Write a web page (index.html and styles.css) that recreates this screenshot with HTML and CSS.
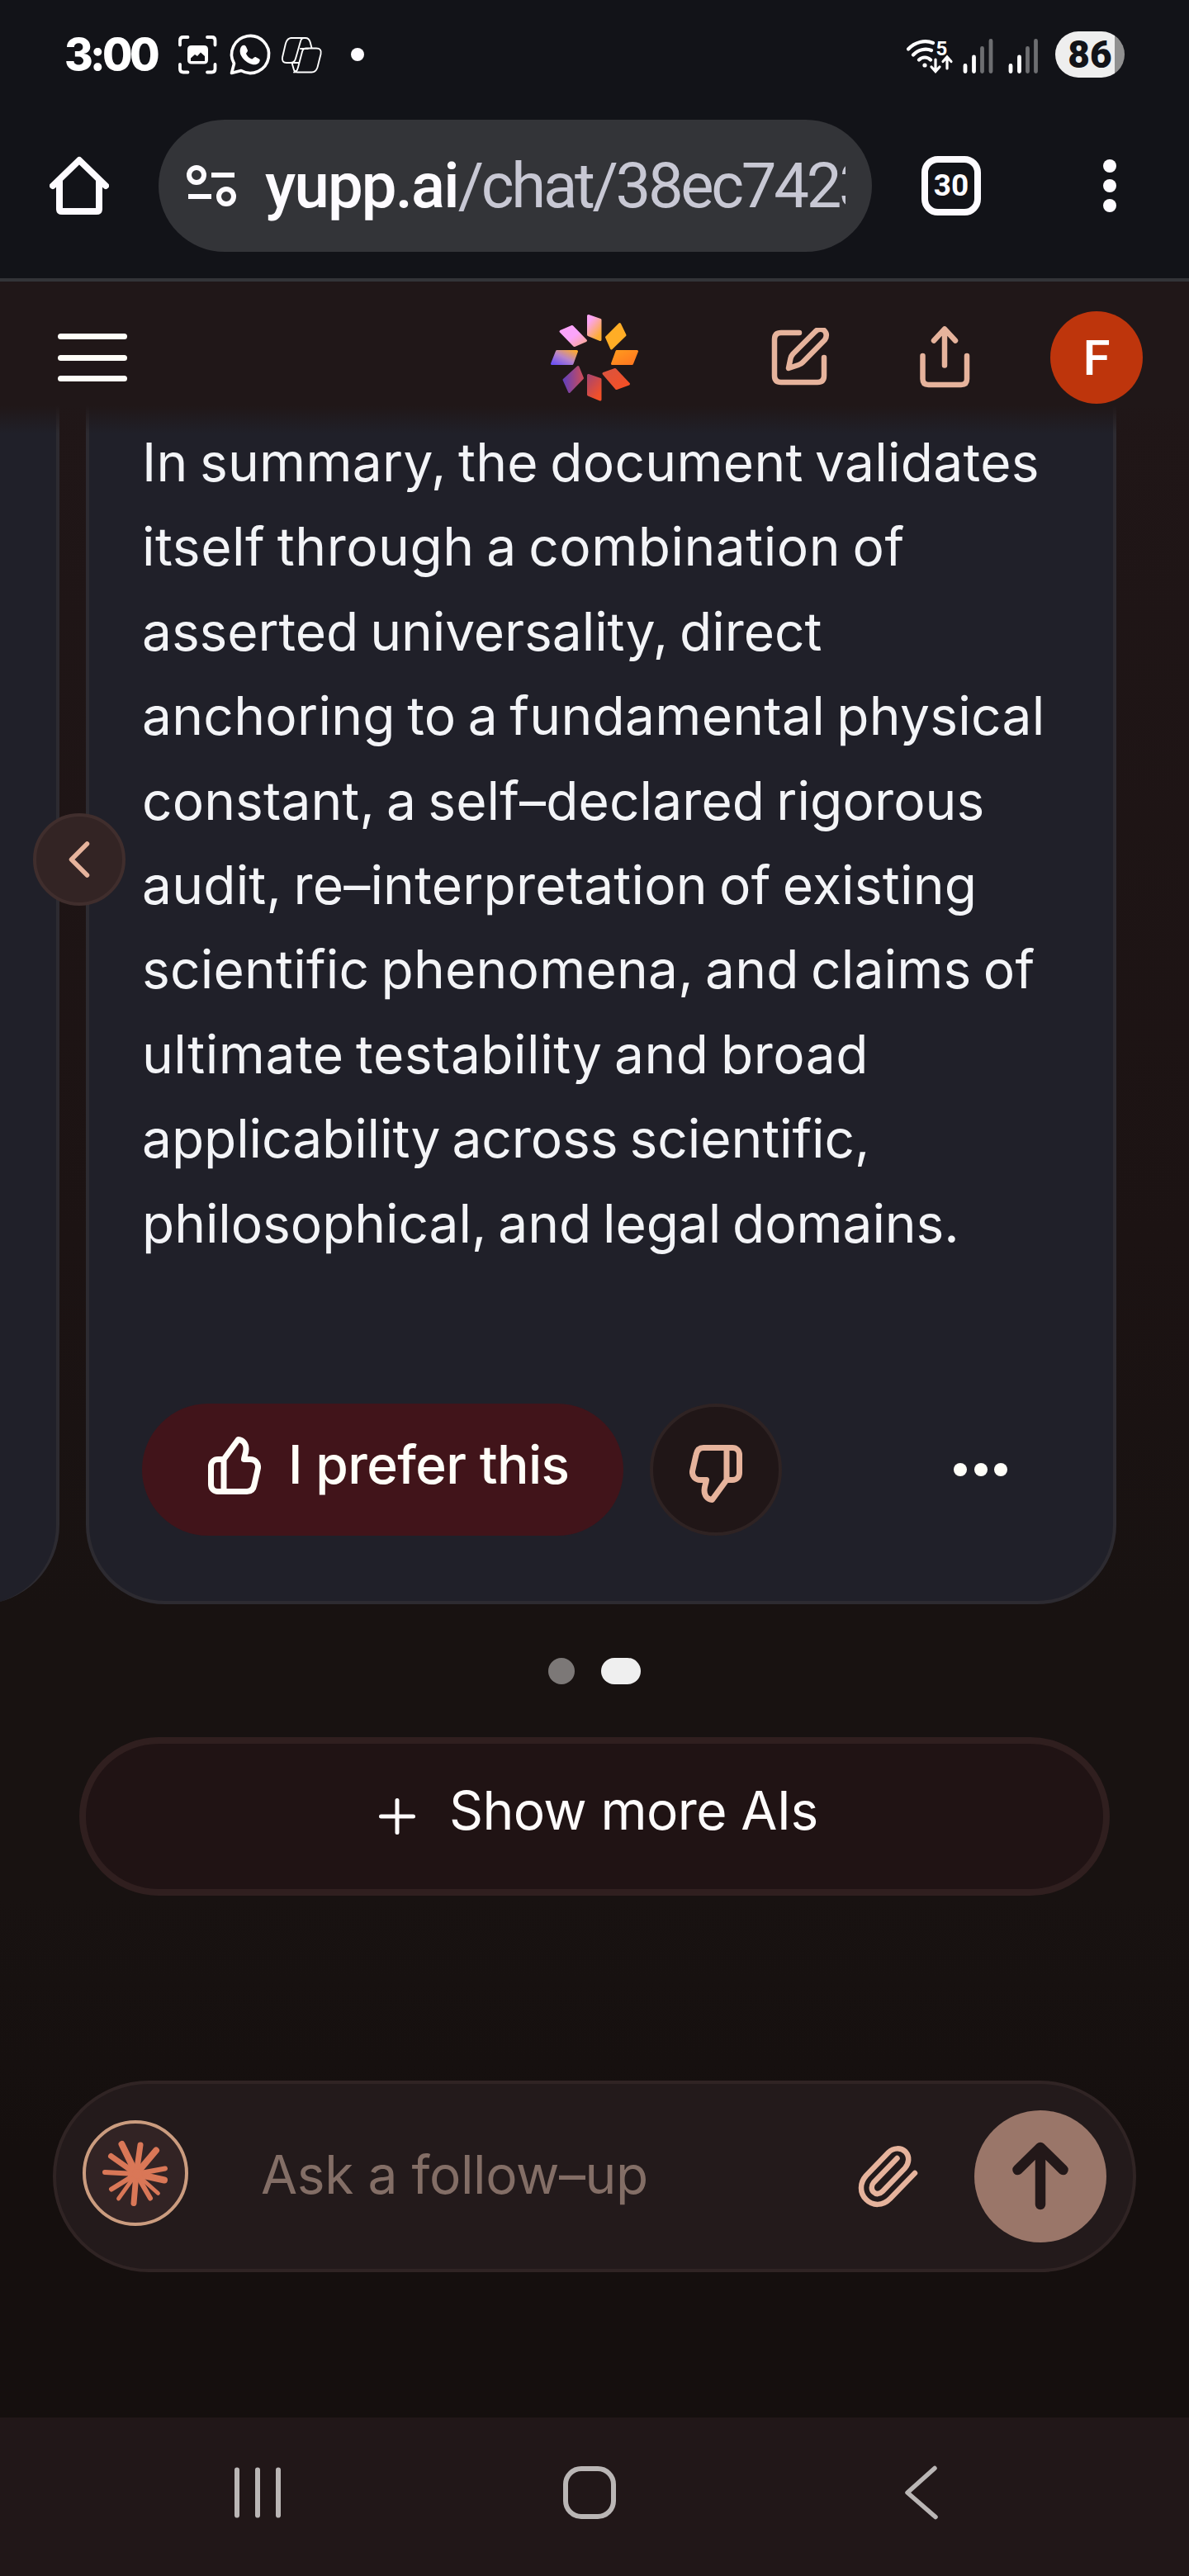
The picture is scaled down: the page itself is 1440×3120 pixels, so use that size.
FILE: index.html
```html
<!DOCTYPE html>
<html lang="en">
<head>
<meta charset="utf-8">
<title>Yupp chat</title>
<link rel="stylesheet" href="styles.css">
</head>
<body>
<div class="screen">
  <div class="status">
    <span class="clock">3:00</span>
    <svg class="notif" width="190" height="60" viewBox="0 0 190 60" fill="none" stroke="#fff" stroke-width="3.8" stroke-linecap="round" stroke-linejoin="round">
      <path d="M8 18.500V13q0-4 4-4h5.500M41 9h5.500q4 0 4 4v5.500M8 42v5.500q0 4 4 4h5.500M41 51.500h5.500q4 0 4-4V42"/>
      <path fill="#fff" stroke="none" fill-rule="evenodd" d="M22 19h15q5 0 5 5v12.500q0 5-5 5H22q-5 0-5-5V24q0-5 5-5zM21 38h17v-6l-5-4.500-4 4.500-3-2-5 4.500z"/>
      <path stroke-width="3.600" d="M70.500 52.500l3-11.500a22.500 22.500 0 1 1 8.500 8.500z"/>
      <path fill="#fff" stroke="none" d="M83 19.500c2-1.500 4-1 5 1l2 4.500c.500 1.500-2 3-2 4 1.500 3.500 4 5.500 7 6.500 1.500 0 2.500-3 4.500-2.500l4.500 2.500c1.500 1 .500 4-1.500 5.500-3 2-7 1.500-11-.500-5-2.500-9-7-10.500-11.500-1-4 0-7.500 2-9.500z"/>
      <g stroke-width="1.900"><path d="M142 10h18q4 0 5.500 4.500l2 7.500M167 22.500h6q7 0 5.500 7l-4 16q-2 6-7 6h-17q-4 0-5-4.500l-2-7M143 40h-6q-6 0-5-6.500l4-17q2-6.500 7-6.500M158 10q-3 0-4 4l-6 21q-1.500 5-6 5M167 22.500h-6q-4 0-5 4l-5 19q-1.500 6-5 6M154 23h9M144 40h8.500"/></g>
    </svg>
    <i class="more-dot"></i>
    <span class="spacer"></span>
    <svg class="radio" width="162" height="48" viewBox="0 0 162 48" fill="none" stroke="#fff" stroke-linecap="round">
      <path stroke-width="4.200" d="M2 17.500C10 9 22 6 32 10M8 24.500C14 18 23 16 30 19M15 30.500c4-4 10-4 14 0"/>
      <circle cx="22" cy="37" r="2.600" fill="#fff" stroke="none"/>
      <path stroke-width="3.200" d="M35 30v14m-5-5l5 5.500 5-5.500M49 41V27.500m-5 5l5-5.500 5 5.500"/>
      <text x="35.500" y="25" class="five">5</text>
      <g stroke-width="4.800"><path d="M71 37.500v7M81.500 27v17.500M126 37.500v7M136.500 27v17.500"/><path stroke="#6d6e71" d="M91.500 16.500v28M102 7.500v37M146.500 16.500v28M156.500 7.500v37"/></g>
    </svg>
    <span class="battery"><b>86</b></span>
  </div>

  <div class="toolbar">
    <svg class="home" width="72" height="72" viewBox="0 0 72 72" fill="none" stroke="#fdfbff" stroke-width="8" stroke-linejoin="round" stroke-linecap="round"><path d="M4 36L36 5l32 31M12 30v34q0 3 3 3h42q3 0 3-3V30"/></svg>
    <div class="address">
      <svg width="60" height="52" viewBox="0 0 60 52" fill="none" stroke="#fdfbff" stroke-width="6"><circle cx="12" cy="13" r="9"/><path d="M30 13h28M2 39h28"/><circle cx="48" cy="39" r="9"/></svg>
      <span class="url"><b>yupp.ai</b>/chat/38ec7423</span>
    </div>
    <span class="tabs">30</span>
    <span class="kebab"><i></i><i></i><i></i></span>
  </div>

  <header class="header">
    <div class="menu"><i></i><i></i><i></i></div>
    <svg class="logo" width="108" height="108" viewBox="666 379 108 108" stroke-width="3" stroke-linejoin="round">
      <defs>
        <linearGradient id="a" x1="0" y1="0" x2=".6" y2="1"><stop offset=".2" stop-color="#fba4f3"/><stop offset="1" stop-color="#fdac35"/></linearGradient>
        <linearGradient id="b" x1="0" y1="0" x2="1" y2="1"><stop offset="0" stop-color="#ff9a1e"/><stop offset="1" stop-color="#ff7520"/></linearGradient>
        <linearGradient id="c" x1="0" y1="0" x2="1" y2="1"><stop offset="0" stop-color="#d95440"/><stop offset="1" stop-color="#f84f22"/></linearGradient>
        <linearGradient id="d" x1="0" y1="0" x2=".6" y2="1"><stop offset="0" stop-color="#a8456f"/><stop offset="1" stop-color="#f25028"/></linearGradient>
        <linearGradient id="e" x1="0" y1=".5" x2="1" y2=".5"><stop offset="0" stop-color="#6540b8"/><stop offset="1" stop-color="#c84c5c"/></linearGradient>
        <linearGradient id="f" x1="0" y1="1" x2="1" y2="0"><stop offset="0" stop-color="#6a50f5"/><stop offset=".5" stop-color="#b884c8"/><stop offset="1" stop-color="#ffaa2c"/></linearGradient>
        <linearGradient id="g" x1="0" y1="0" x2="1" y2="1"><stop offset=".5" stop-color="#fba4fa"/><stop offset="1" stop-color="#fba890"/></linearGradient>
      </defs>
      <path fill="url(#a)" stroke="url(#a)" d="M712.500 382.500l14.500 5v24l-14.500-6z"/>
      <path fill="#ffad26" stroke="#ffad26" d="M750.500 392.500l6.500 13.500-16.500 16-6-13.500z"/>
      <path fill="url(#b)" stroke="url(#b)" d="M747 425.500h24.500l-6 15H741.500z"/>
      <path fill="url(#c)" stroke="url(#c)" d="M731 452.500l14-5 16.500 17.500-15 5.500z"/>
      <path fill="url(#d)" stroke="url(#d)" d="M712.500 454.500l14.500 5v24.500l-14.500-6z"/>
      <path fill="url(#e)" stroke="url(#e)" d="M700 444.500l5.500 13.500-16 16.500-6.500-14.500z"/>
      <path fill="url(#f)" stroke="url(#f)" d="M674.500 425.500h24l-5.500 15H668.500z"/>
      <path fill="url(#g)" stroke="url(#g)" d="M679 401.500l14-6 16.500 17-14 6z"/>
    </svg>
    <div class="actions">
      <svg width="72" height="72" viewBox="934 396 72 72" fill="none" stroke="#e6b39c" stroke-width="6.500" stroke-linecap="round" stroke-linejoin="round"><path d="M968 402H946q-8 0-8 8v44q0 8 8 8h44q8 0 8-8V432"/><path d="M955 445l2.500-12q.700-3 3-5.500L987 401q5-5.500 11-2 5 5 1 11.500L972 438q-2 2-5 3z"/></svg>
      <svg width="64" height="78" viewBox="1112 394 64 78" fill="none" stroke="#e6b39c" stroke-width="6.500" stroke-linecap="round" stroke-linejoin="round"><path d="M1144 442.500V399M1131 412.500l13-14 13 14M1117.500 431v28q0 7 7 7h39.500q7 0 7-7V431"/></svg>
      <span class="avatar">F</span>
    </div>
  </header>

  <main class="chat">
    <div class="carousel">
      <section class="card previous"></section>
      <section class="card current">
        <p class="answer">
          <span class="s1">In summary, the document validates</span>
          <span class="s2">itself through a combination of</span>
          <span class="s3">asserted universality, direct</span>
          <span class="s4">anchoring to a fundamental physical</span>
          <span class="s5">constant, a self–declared rigorous</span>
          <span class="s6">audit, re–interpretation of existing</span>
          <span class="s7">scientific phenomena, and claims of</span>
          <span class="s8">ultimate testability and broad</span>
          <span class="s9">applicability across scientific,</span>
          <span class="s10">philosophical, and legal domains.</span>
        </p>
        <div class="feedback">
          <button class="prefer">
            <svg class="thumb" width="64" height="70" viewBox="252 1740 64 70"><path d="M271 1806.500V1767.500l17.500-24c6 .500 9.500 5.500 9.500 11.500 0 5-2 8-2.500 12.500H303c6 0 10 4.500 9.500 10.500l-4.500 20c-1 5.500-4 8.500-9 8.500H264c-5 0-8.500-3.500-8.500-8.500V1776c0-5 3.500-8.500 8.500-8.500h7"/></svg>
            <span>I prefer this</span>
          </button>
          <button class="dislike"><svg class="thumb" width="64" height="70" viewBox="252 1740 64 70"><path d="M271 1806.500V1767.500l17.500-24c6 .500 9.500 5.500 9.500 11.500 0 5-2 8-2.500 12.500H303c6 0 10 4.500 9.500 10.500l-4.500 20c-1 5.500-4 8.500-9 8.500H264c-5 0-8.500-3.500-8.500-8.500V1776c0-5 3.500-8.500 8.500-8.500h7"/></svg></button>
          <span class="ellipsis"><i></i><i></i><i></i></span>
        </div>
      </section>
      <button class="back"><svg width="28" height="48" viewBox="0 0 28 48" fill="none" stroke="#e6b39c" stroke-width="5.500" stroke-linecap="round" stroke-linejoin="round"><path d="M23.500 5L4.500 24l19 19"/></svg></button>
    </div>
    <div class="pager"><i></i><i class="on"></i></div>
    <button class="show-more">
      <svg width="44" height="44" viewBox="0 0 44 44" stroke="#fdfbfb" stroke-width="5" stroke-linecap="round"><path d="M22 2.500v39M2.500 22h39"/></svg>
      <span>Show more AIs</span>
    </button>
    <div class="composer">
      <span class="model">
        <svg width="80" height="80" viewBox="124 2592 80 80" stroke="#d97757" stroke-linecap="round">
          <path stroke-width="8" d="M165 2633L147.500 2597M165 2633L189 2604.500M165 2633L199 2640.500"/>
          <path stroke-width="7" d="M165 2633L170 2598M165 2633L134.500 2611.500M165 2633L162 2668.500"/>
          <path stroke-width="6" d="M165 2633L200 2626.500M165 2633L182 2662.500M165 2633L135 2651.500M165 2633L127 2631"/>
          <path stroke-width="4.800" d="M165 2633L191.500 2656.500M165 2633L143.500 2663"/>
          <circle cx="166" cy="2633" r="6" fill="#d97757"/>
        </svg>
      </span>
      <span class="placeholder">Ask a follow–up</span>
      <svg class="clip" width="76" height="80" viewBox="1037 2596 76 80" fill="none" stroke="#e6b39c" stroke-width="6.500" stroke-linecap="round" stroke-linejoin="round"><path d="M1108 2632L1078 2663C1069 2672 1057 2672 1049 2664 1041 2656 1041 2644 1049 2635L1076 2607C1082 2601 1091 2601 1096.500 2606 1102 2612 1101 2620 1096 2626L1069 2654C1065 2658 1061 2658 1058 2655 1055 2652 1055 2647 1058 2643.500L1086.500 2614"/></svg>
      <span class="send"><svg width="72" height="88" viewBox="0 0 72 88" fill="none" stroke="#231819" stroke-width="12.500" stroke-linecap="round" stroke-linejoin="round"><path d="M36 78V9M8.500 36L36 9l27.500 27"/></svg></span>
    </div>
  </main>

  <nav class="navbar">
    <svg width="60" height="66" viewBox="0 0 60 66" stroke="#bab6b5" stroke-width="6" stroke-linecap="round"><path d="M5 5.500v55M30 5.500v55M55 5.500v55"/></svg>
    <i class="nav-home"></i>
    <svg width="42" height="70" viewBox="0 0 42 70" fill="none" stroke="#bab6b5" stroke-width="5.500" stroke-linecap="round" stroke-linejoin="round"><path d="M37 5.500L4 35l34 29.500"/></svg>
  </nav>
</div>
</body>
</html>
```
FILE: styles.css
```css
* { box-sizing: border-box; }
body { margin: 0; background: #181211; font-family: Inter, "Liberation Sans", sans-serif; }
button { font: inherit; color: inherit; border: 0; padding: 0; margin: 0; }
svg { display: block; flex: none; }
i { display: block; }

.screen { width: 1440px; height: 3120px; display: flex; flex-direction: column; overflow: hidden;
  background: linear-gradient(#201617 490px, #1c1313 1500px, #181211 1950px, #181211 2300px, #150f0e 2600px, #150f0e); }

.status { height: 132px; flex: none; display: flex; align-items: center; padding: 0 78px; background: #121318; color: #fff; }
.clock { width: 132px; font-size: 53px; font-weight: 800; letter-spacing: -3.7px; line-height: 60px; }
.more-dot { margin-left: 25px; }
.more-dot, .kebab i, .ellipsis i { background: #fdfbff; width: 16px; height: 16px; border-radius: 50%; }
.spacer { flex: 1; }
.five { font: 700 24px Roboto, sans-serif; fill: #fff; stroke: none; }
.radio { margin-right: 18px; }
.battery { width: 84px; height: 56px; border-radius: 28px; background: linear-gradient(90deg, #eee 72px, #909090 72px); color: #121318;
  display: flex; align-items: center; justify-content: center; font: 700 46px/56px Roboto, sans-serif; }

.toolbar { height: 209px; flex: none; display: flex; align-items: flex-start; padding: 13px 88px 0 60px; background: #121318; border-bottom: 4px solid #333438; }
.home { margin: 44px 60px 0 0; }
.address { width: 864px; height: 160px; border-radius: 80px; background: #333438; display: flex; align-items: center; padding: 0 32px 0 34px; gap: 35px; }
.url { flex: 1; overflow: hidden; white-space: nowrap; font: 400 76px/100px Roboto, sans-serif; letter-spacing: -3.3px; color: #c8c8d4; }
.url b { font-weight: 500; letter-spacing: -1.8px; color: #fdfbff; }
.tabs { width: 72px; height: 72px; margin: 44px 0 0 60px; border: 8px solid #fdfbff; border-radius: 20px; color: #fdfbff;
  display: flex; align-items: center; justify-content: center; font: 700 37px/40px Roboto, sans-serif; }
.kebab { display: flex; flex-direction: column; gap: 8px; margin: 48px 0 0 148px; }

.header { position: relative; z-index: 1; height: 184px; margin-bottom: -35px; flex: none; display: flex; align-items: center; justify-content: space-between;
  padding: 0 56px 0 70px; background: linear-gradient(#201718 150px, rgba(32, 23, 24, 0)); }
.menu { width: 84px; display: flex; flex-direction: column; gap: 18.5px; }
.menu i { height: 7px; border-radius: 4px; background: #fffef8; }
.logo { margin-left: 512px; }
.actions { display: flex; align-items: center; flex: 1; margin-left: 160px; }
.actions svg + svg { margin-left: 106px; }
.avatar { width: 112px; height: 112px; margin-left: auto; border-radius: 50%; background: #be350c; color: #fff;
  font: 500 60px/114px Roboto, sans-serif; text-align: center; }

.chat { flex: 1; display: flex; flex-direction: column; }
.carousel { position: relative; height: 1453px; display: flex; gap: 32px; }
.card { flex: none; width: 1248px; background: #202029; border: solid #2d2b31; }
.previous { margin-left: -1176px; border-width: 0 4px 0 0; border-radius: 0 0 96px 96px; }
.current { border-width: 0 4px 4px; border-radius: 0 0 96px 96px; padding: 19px 64px 80px; }
.answer { margin: 0; font-size: 64px; line-height: 102.4px; color: #f3f4f7; white-space: nowrap; word-spacing: -4px; }
.answer span { display: block; }
.s1, .s4 { letter-spacing: .3px; }
.s2, .s8 { letter-spacing: .53px; }
.s3, .s9, .s10 { letter-spacing: -.06px; }
.s5 { letter-spacing: .12px; }
.s6, .s7 { letter-spacing: .22px; }
.feedback { display: flex; align-items: center; margin-top: 167px; }
.thumb { fill: none; stroke: #fffef8; stroke-width: 7; stroke-linejoin: round; }
.prefer { width: 583px; height: 160px; border-radius: 80px; background: #41141a; color: #fffef8; display: flex; align-items: center; padding: 0 0 10px 80px; gap: 33px;
  font-size: 64px; font-weight: 500; letter-spacing: -.6px; white-space: nowrap; }
.prefer span { margin-top: -4px; }
.dislike { width: 160px; height: 160px; margin-left: 32px; border-radius: 50%; background: #201617; border: 4px solid #2f2323; display: flex; align-items: center; justify-content: center; padding-top: 10px; }
.dislike svg { transform: rotate(180deg); stroke: #e6b39c; }
.ellipsis { display: flex; gap: 8.6px; margin-left: 208px; }
.ellipsis i { background: #fffef8; }
.back { position: absolute; left: 40px; top: 495px; width: 112px; height: 112px; border-radius: 50%; background: #332424; border: 4px solid #402e2d;
  display: flex; align-items: center; justify-content: center; }

.pager { display: flex; justify-content: center; gap: 32px; margin-top: 65px; }
.pager i { width: 32px; height: 32px; border-radius: 16px; background: #7c7877; }
.pager .on { width: 48px; background: #efefef; }
.show-more { width: 1248px; height: 192px; margin: 64px auto 0; border: 8px solid #301f1f; border-radius: 96px; background: #201314; color: #fdfbfb;
  display: flex; align-items: center; padding-left: 355px; gap: 41px; font-size: 64px; letter-spacing: -.6px; }
.show-more span { margin-top: -15px; }
.composer { width: 1312px; height: 232px; margin: 224px auto 0; border: 4px solid #302424; border-radius: 116px; background: #231a1b;
  display: flex; align-items: center; padding: 0 32px; }
.model { width: 128px; height: 128px; margin-top: -8px; border-radius: 50%; border: 4px solid #cb9c7f; background: #322324; display: flex; align-items: center; justify-content: center; }
.placeholder { width: 721px; margin: -6px 0 0 88px; font-size: 64px; letter-spacing: -.4px; color: #836e66; }
.send { width: 160px; height: 160px; margin-left: 67px; border-radius: 50%; background: #9a7669; display: flex; align-items: center; justify-content: center; }

.navbar { height: 192px; flex: none; background: #211718; display: flex; align-items: center; padding: 0 303px 11px 282px; justify-content: space-between; }
.nav-home { width: 64px; height: 64px; margin-right: 9px; border: 6px solid #bab6b5; border-radius: 22px; }
```
